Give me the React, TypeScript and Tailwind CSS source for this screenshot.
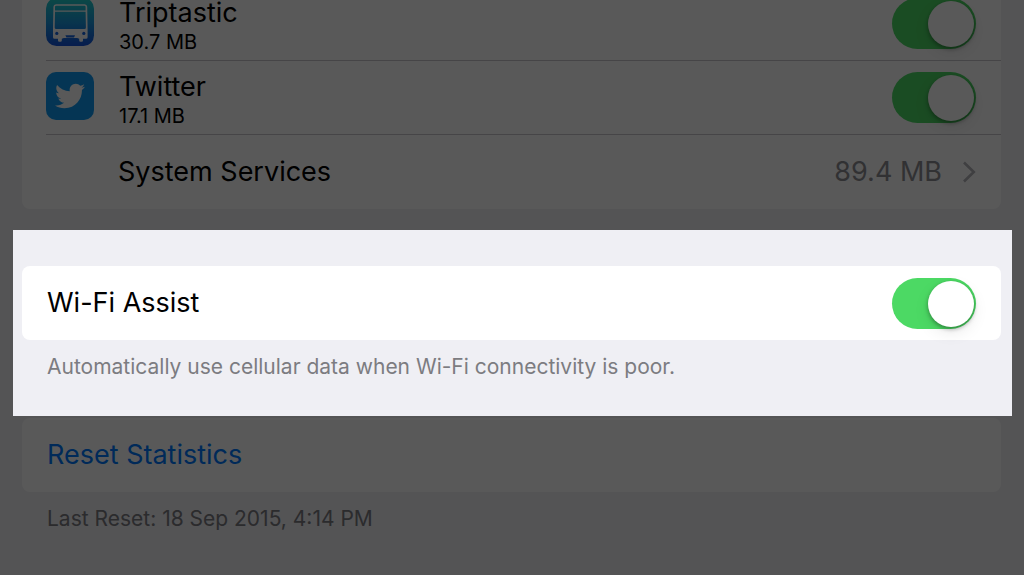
import type { ReactNode } from "react";
import { FaTwitter } from "react-icons/fa";

function Toggle({ id }: { id: string }) {
  return (
    <input
      id={id}
      type="checkbox"
      role="switch"
      defaultChecked
      className="relative h-[51px] w-[84px] shrink-0 cursor-pointer appearance-none rounded-full bg-[#d8d8dc] before:absolute before:top-[3px] before:left-[3px] before:size-[46px] before:rounded-full before:bg-white before:shadow-[0_2px_4px_rgba(0,0,0,0.35),0_6px_16px_rgba(0,0,0,0.08)] before:content-[''] checked:bg-[#4cd964] checked:before:left-[36px]"
    />
  );
}

function BusIcon() {
  return (
    <svg viewBox="0 0 48 48" className="size-12 shrink-0" aria-hidden="true">
      <defs>
        <linearGradient id="bus-sky" x1="0" y1="0" x2="0" y2="1">
          <stop offset="0" stopColor="#22d0c8" />
          <stop offset="0.5" stopColor="#1a98dc" />
          <stop offset="1" stopColor="#1452dc" />
        </linearGradient>
      </defs>
      <rect width="48" height="48" rx="10.5" fill="url(#bus-sky)" />
      <path
        fill="#fff"
        fillRule="evenodd"
        d="M10 6.3h28.6a2.6 2.6 0 0 1 2.6 2.5L41.6 32v7.2a1.6 1.6 0 0 1-1.6 1.6H37v1.7a1.3 1.3 0 0 1-1.3 1.3h-1.2a1.3 1.3 0 0 1-1.3-1.3v-1.7l-2-.8H17.8l-2 .8v1.7a1.3 1.3 0 0 1-1.3 1.3h-1.2a1.3 1.3 0 0 1-1.3-1.3v-1.7H8.6A1.6 1.6 0 0 1 7 39.200V32l.4-23.200A2.6 2.6 0 0 1 10 6.300ZM10.200 7.800a1.200 1.200 0 0 0-1.200 1.200v3.400h30.600V9a1.200 1.200 0 0 0-1.200-1.200ZM9 13.800 8.700 29.400a1.600 1.600 0 0 0 1.600 1.700h28a1.600 1.600 0 0 0 1.600-1.700l-.300-15.600Z"
      />
      <circle cx="10.8" cy="35.4" r="1.6" fill="#1866e0" />
      <circle cx="37.8" cy="35.4" r="1.6" fill="#1866e0" />
      <path d="M19.4 37.2h9.6l-1 2.3h-7.6Z" fill="#1866e0" />
    </svg>
  );
}

function TwitterIcon() {
  return (
    <span className="flex size-12 shrink-0 items-center justify-center rounded-[10px] bg-[#1099f0] text-white">
      <FaTwitter size={30} aria-hidden="true" />
    </span>
  );
}

function AppRow({ id, name, usage, icon }: { id: string; name: string; usage: string; icon: ReactNode }) {
  return (
    <li className="ml-6 flex h-[74px] items-start gap-[25px] border-b border-[#c8c7cc] pt-[11px] pr-[25px]">
      {icon}
      <label htmlFor={id} className="flex-1">
        <span className="block text-[27px] leading-[30px]">{name}</span>
        <span className="block text-[20px] leading-7">{usage}</span>
      </label>
      <Toggle id={id} />
    </li>
  );
}

function Dimmed({ className, children }: { className: string; children: ReactNode }) {
  return (
    <section className={`relative bg-[#efeff4] pr-[23px] pl-[22px] ${className}`}>
      {children}
      <div className="pointer-events-none absolute inset-0 bg-black/65" />
    </section>
  );
}

export default function App() {
  return (
    <main className="flex min-h-screen flex-col overflow-hidden bg-[#545455] font-[Inter,'Liberation_Sans',sans-serif] text-black">
      <Dimmed className="-mt-[13px] pb-[21px]">
        <ul className="rounded-b-lg bg-white">
          <AppRow id="triptastic" name="Triptastic" usage="30.7 MB" icon={<BusIcon />} />
          <AppRow id="twitter" name="Twitter" usage="17.1 MB" icon={<TwitterIcon />} />
          <li>
            <a href="#system-services" className="flex h-[74px] items-center pr-[25px] pl-24 text-[27px]">
              <span className="flex-1">System Services</span>
              <span className="text-[#8e8e93]">89.4 MB</span>
              <svg
                viewBox="0 0 14 22"
                className="ml-5 h-[22px] w-[14px] text-[#b4b4b9]"
                fill="none"
                stroke="currentColor"
                strokeWidth="2.6"
                aria-hidden="true"
              >
                <path d="M2 1.5 11.8 11 2 20.5" />
              </svg>
            </a>
          </li>
        </ul>
      </Dimmed>

      <section className="mr-3 ml-[13px] bg-[#efeff4] pt-9 pr-[11px] pb-9 pl-[9px]">
        <div className="flex h-[74px] items-center justify-between rounded-lg bg-white px-[25px]">
          <label htmlFor="wifi-assist" className="text-[27px]">
            Wi-Fi Assist
          </label>
          <Toggle id="wifi-assist" />
        </div>
        <p className="mt-3.5 px-[25px] text-[21px] leading-[26px] text-[#7c7c81]">
          Automatically use cellular data when Wi-Fi connectivity is poor.
        </p>
      </section>

      <Dimmed className="flex-1 pt-0.5 pb-8">
        <button
          type="button"
          className="block h-[74px] w-full cursor-pointer rounded-lg bg-white px-[25px] text-left text-[27px] text-[#007aff]"
        >
          Reset Statistics
        </button>
        <p className="mt-3.5 px-[25px] text-[21px] leading-[26px] text-[#7c7c81]">
          Last Reset: 18 Sep 2015, 4:14 PM
        </p>
      </Dimmed>
    </main>
  );
}
